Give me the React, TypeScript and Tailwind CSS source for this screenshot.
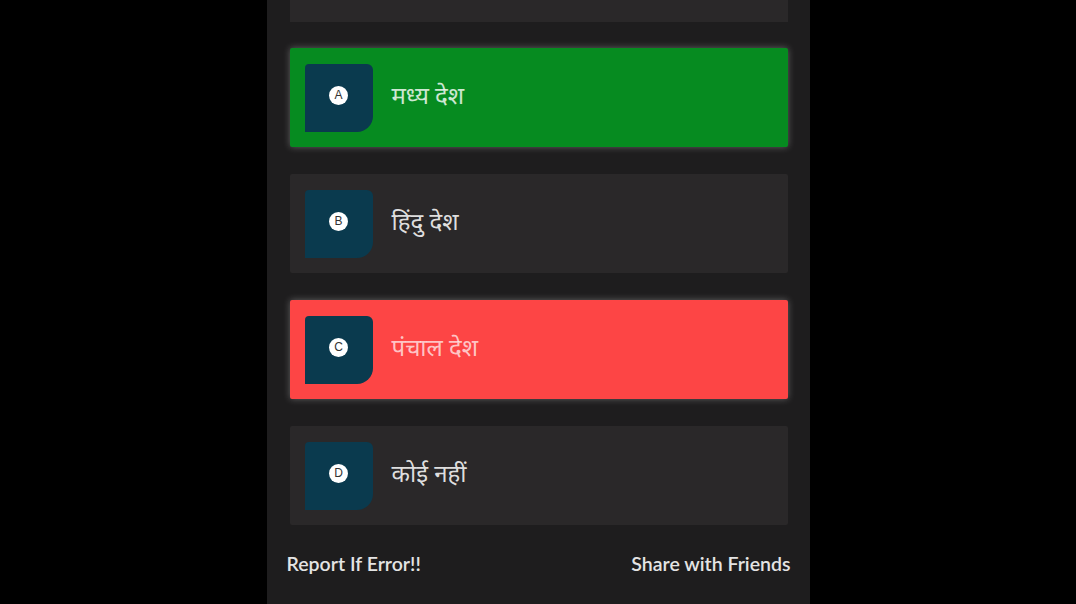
import React from "react";

type Option = { key: string; label: string; state: "correct" | "wrong" | "none" };

const OPTIONS: Option[] = [
  { key: "A", label: "मध्य देश", state: "correct" },
  { key: "B", label: "हिंदु देश", state: "none" },
  { key: "C", label: "पंचाल देश", state: "wrong" },
  { key: "D", label: "कोई नहीं", state: "none" },
];

function OptionCard({ option }: { option: Option }) {
  const bg =
    option.state === "correct"
      ? "bg-[#068b20] shadow-[0_0_7px_rgba(255,255,255,0.3)] text-white/80"
      : option.state === "wrong"
      ? "bg-[#fd4545] shadow-[0_0_7px_rgba(255,255,255,0.3)] text-white/70"
      : "bg-[#2a2829] text-[#dedede]";

  return (
    <div className={`flex items-center h-[99px] pl-[15px] rounded-[2px] ${bg}`}>
      <div className="w-[68px] h-[68px] bg-[#0a3a4e] rounded-tl-[4px] rounded-tr-[6px] rounded-br-[16px] flex items-center justify-center shrink-0">
        <span
          className="w-[19px] h-[19px] -mt-[5px] rounded-full bg-white text-[#333] text-[12px] leading-none flex items-center justify-center"
          style={{ fontFamily: "'Liberation Sans', sans-serif" }}
        >
          {option.key}
        </span>
      </div>
      <span
        className="ml-[19px] text-[24px] leading-none -mt-[5px]"
        style={{ fontFamily: "'Noto Sans', 'Lato', sans-serif" }}
      >
        {option.label}
      </span>
    </div>
  );
}

export default function App() {
  return (
    <div className="w-[1076px] h-[604px] bg-black flex justify-center overflow-hidden">
      <div className="w-[543px] h-full bg-[#1e1d1e] flex flex-col px-[23px] pr-[22px]">
        {/* previous card, scrolled off the top */}
        <div className="h-[22px] bg-[#2a2829] shrink-0" />

        <div className="flex flex-col gap-[27px] mt-[26px]">
          {OPTIONS.map((o) => (
            <OptionCard key={o.key} option={o} />
          ))}
        </div>

        <div
          className="flex justify-between items-center mt-[24px] text-[#e4e4e4] text-[19.5px] font-semibold -mx-[3px]"
          style={{ fontFamily: "'Lato', 'Open Sans', sans-serif" }}
        >
          <span>Report If Error!!</span>
          <span>Share with Friends</span>
        </div>
      </div>
    </div>
  );
}
